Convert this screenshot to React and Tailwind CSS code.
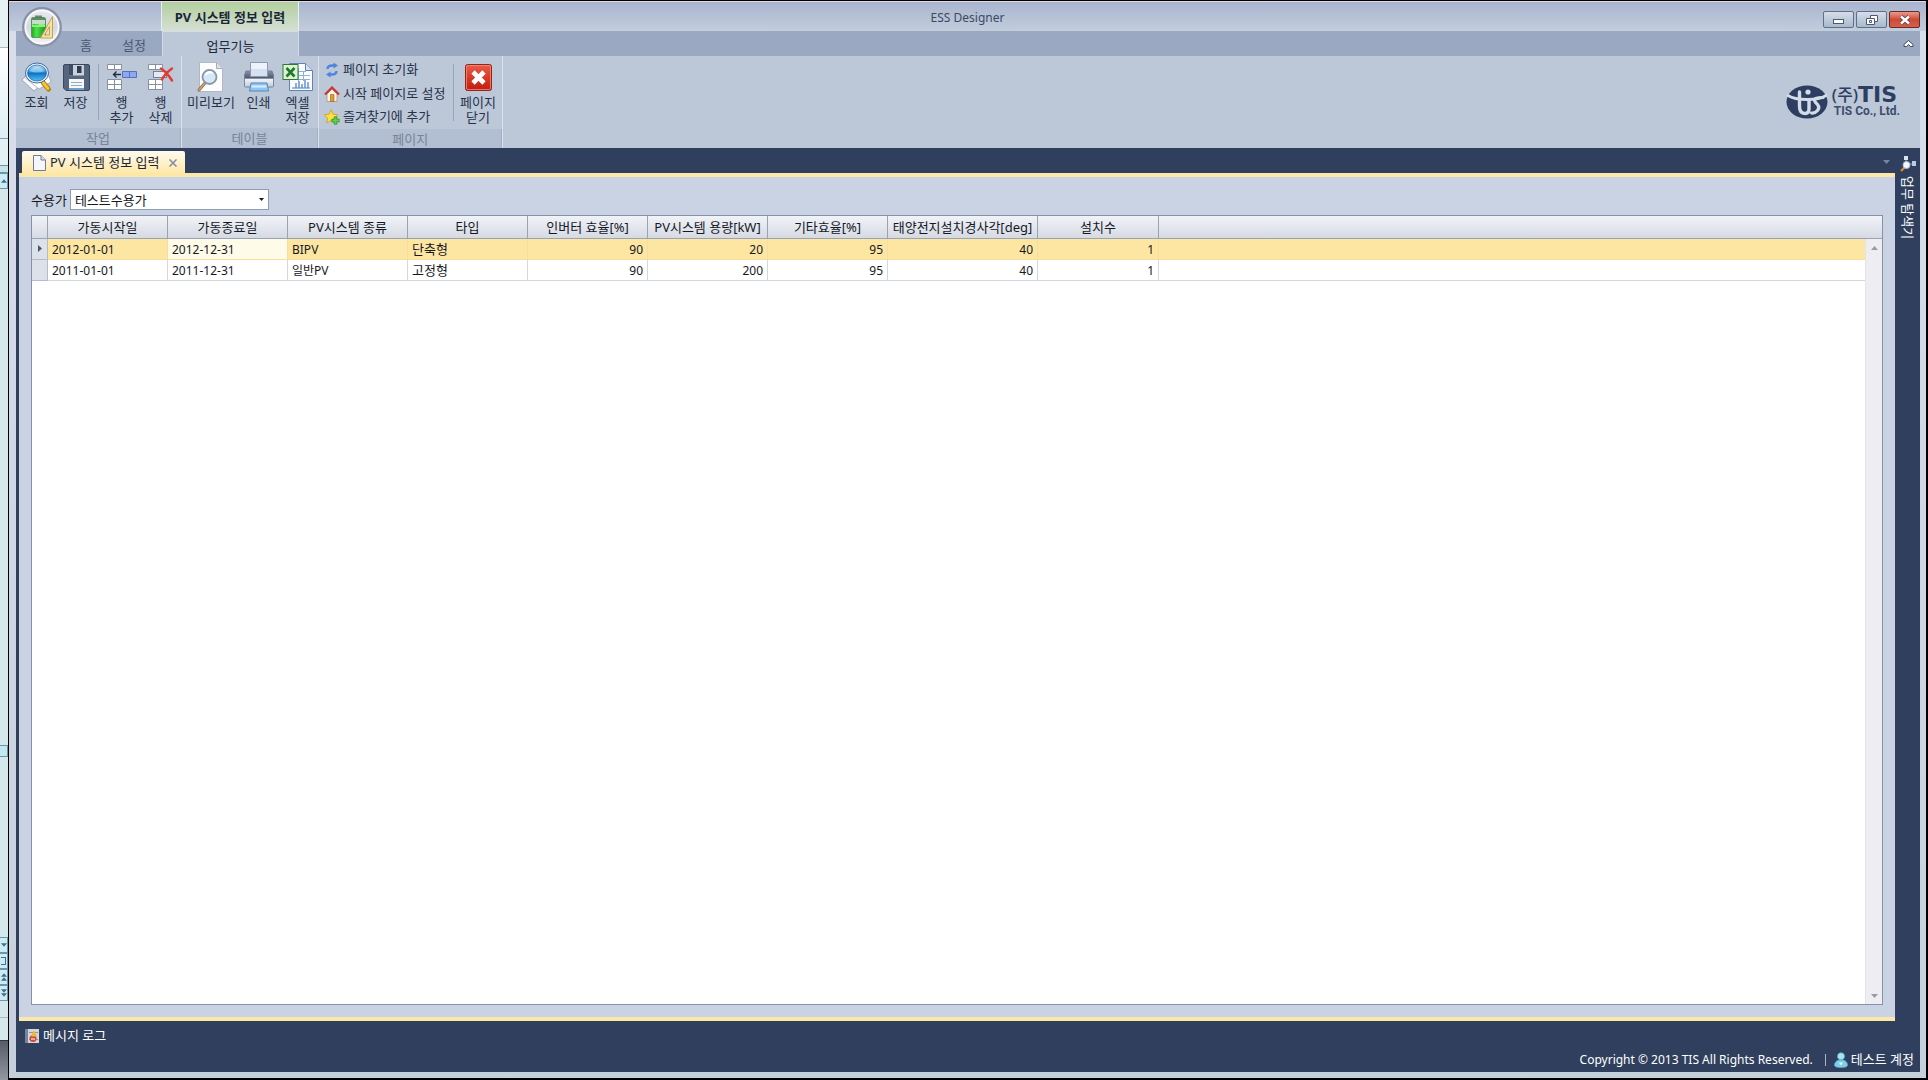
import { useState } from 'react';

const columns = [
  { key: 'start', label: '가동시작일', width: 'w-[120px]' },
  { key: 'end', label: '가동종료일', width: 'w-[120px]' },
  { key: 'kind', label: 'PV시스템 종류', width: 'w-[120px]' },
  { key: 'type', label: '타입', width: 'w-[120px]' },
  { key: 'inverter', label: '인버터 효율[%]', width: 'w-[120px]', numeric: true },
  { key: 'capacity', label: 'PV시스템 용량[kW]', width: 'w-[120px]', numeric: true },
  { key: 'etc', label: '기타효율[%]', width: 'w-[120px]', numeric: true },
  { key: 'angle', label: '태양전지설치경사각[deg]', width: 'w-[150px]', numeric: true },
  { key: 'count', label: '설치수', width: 'w-[121px]', numeric: true },
];

const rows = [
  { start: '2012-01-01', end: '2012-12-31', kind: 'BIPV', type: '단축형', inverter: 90, capacity: 20, etc: 95, angle: 40, count: 1 },
  { start: '2011-01-01', end: '2011-12-31', kind: '일반PV', type: '고정형', inverter: 90, capacity: 200, etc: 95, angle: 40, count: 1 },
];

/* icons */

const AppIcon = () => (
  <svg viewBox="0 0 40 40" className="h-10 w-10">
    <defs>
      <linearGradient id="orb" x1="0" y1="0" x2="0" y2="1">
        <stop offset="0" stopColor="#eceef3" />
        <stop offset="0.5" stopColor="#d3d7e0" />
        <stop offset="1" stopColor="#f6f7fa" />
      </linearGradient>
      <linearGradient id="tank" x1="0" y1="0" x2="1" y2="0">
        <stop offset="0" stopColor="#1fa524" />
        <stop offset="0.35" stopColor="#4fe046" />
        <stop offset="1" stopColor="#18952a" />
      </linearGradient>
    </defs>
    <circle cx="20" cy="20" r="18.800" fill="url(#orb)" stroke="#8690a6" strokeWidth="2.200" />
    <circle cx="20" cy="20" r="16.500" fill="none" stroke="#fbfbfd" strokeWidth="1.500" />
    <rect x="13" y="8.500" width="7" height="2.500" fill="#6d8a70" />
    <rect x="9.500" y="10.500" width="14" height="20" rx="1.500" fill="url(#tank)" stroke="#4c7d50" strokeWidth="0.7" />
    <rect x="10" y="11" width="13" height="6" fill="#c7dccb" />
    <path d="M10 11h13v2H10z" fill="#5f8a66" />
    <path d="M10 17q3.500 2.500 6.500.500t6.500 0v2.500H10z" fill="#8df27c" />
    <path
      d="M30.500 9.500v21.500H18.500zM27.500 19.500l-5 8.500h5z"
      fill="#f6e3a0"
      fillRule="evenodd"
      stroke="#c39a4c"
      strokeWidth="0.9"
    />
  </svg>
);

const SearchIcon = () => (
  <svg viewBox="0 0 32 32" className="h-8 w-8">
    <defs>
      <linearGradient id="lens" x1="0" y1="0" x2="0" y2="1">
        <stop offset="0" stopColor="#b9e4fb" />
        <stop offset="0.45" stopColor="#2b93dd" />
        <stop offset="0.5" stopColor="#0c6fc4" />
        <stop offset="1" stopColor="#55c3f5" />
      </linearGradient>
    </defs>
    <path d="M1 19l5-6 22 2-2 4-13 11z" fill="#f7f9fb" stroke="#8f98a8" strokeWidth="0.8" />
    <path d="M3 16l22-9 5 14-12 7z" fill="#fff" stroke="#9aa3b2" strokeWidth="0.8" />
    <path d="M22 21.500l5.500 6.500" stroke="#a97a10" strokeWidth="5" strokeLinecap="round" />
    <path d="M22 21.500l5 6" stroke="#f6c62e" strokeWidth="3" strokeLinecap="round" />
    <ellipse cx="16" cy="12" rx="11.500" ry="10" fill="#eef4fa" stroke="#3d6c9e" strokeWidth="1" />
    <ellipse cx="16" cy="12" rx="9.500" ry="8" fill="url(#lens)" stroke="#1a5d9c" strokeWidth="0.7" />
    <path d="M8.500 10q7.500-8 15 0-7.500 3-15 0z" fill="#fff" opacity="0.35" />
  </svg>
);

const SaveIcon = () => (
  <svg viewBox="0 0 32 32" className="h-8 w-8">
    <path d="M3.500 5q0-1.500 1.500-1.500h23q1.500 0 1.500 1.500v23q0 1.500-1.500 1.500H6L3.500 27z" fill="#56647d" stroke="#39465c" />
    <rect x="9" y="4" width="15" height="10.500" fill="#c9d1dc" />
    <rect x="17" y="5" width="4.500" height="7" fill="#303c4e" />
    <rect x="9" y="4" width="4" height="10.500" fill="#3f4c62" />
    <rect x="9" y="18" width="15" height="10" fill="#f5f8fb" />
    <path d="M11 21.500h11M11 24.500h11" stroke="#9ba8ba" />
    <rect x="9" y="27" width="15" height="2" fill="#6aa0d2" />
  </svg>
);

const RowInsertIcon = () => (
  <svg viewBox="0 0 32 32" className="h-8 w-8">
    <g fill="#fff" stroke="#8790a1">
      <path d="M1.500 3.500h14v5h-14zM8.500 3.500v5" />
      <path d="M1.500 18.500h14v10h-14zM8.500 18.500v10M1.500 23.500h14" />
    </g>
    <path d="M16.500 10.500h14v6h-14zM23.500 10.500v6" fill="#8fa9ee" stroke="#5571c4" />
    <path d="M15 13.500H7.500M10.500 10.500l-3 3 3 3" fill="none" stroke="#1f2c48" strokeWidth="1.300" />
  </svg>
);

const RowDeleteIcon = () => (
  <svg viewBox="0 0 32 32" className="h-8 w-8">
    <g fill="#fff" stroke="#8790a1">
      <path d="M3.500 3.500h14v5h-14zM10.500 3.500v5" />
      <path d="M3.500 18.500h14v10h-14zM10.500 18.500v10M3.500 23.500h14" />
    </g>
    <path d="M8.500 10.500h13v6h-13z" fill="#e3e8f1" stroke="#1f2c48" strokeDasharray="1 1" />
    <path d="M16 7.500q6 4 11 12M27 7.500q-7 5-10 11" fill="none" stroke="#e23a30" strokeWidth="2.400" strokeLinecap="round" />
  </svg>
);

const PreviewIcon = () => (
  <svg viewBox="0 0 32 32" className="h-8 w-8">
    <path d="M4.500 1.500h17l6 6v23h-23z" fill="#fdfdfe" stroke="#b1b7c3" />
    <path d="M21.500 1.500v6h6" fill="#dde2ea" stroke="#a4abb9" />
    <path d="M10 22l-6 7" stroke="#8f6a45" strokeWidth="3" strokeLinecap="round" />
    <path d="M10 22l-6 7" stroke="#d0a679" strokeWidth="1.400" strokeLinecap="round" />
    <circle cx="14.500" cy="16" r="7" fill="#d4e8f7" stroke="#8b95a5" strokeWidth="1.800" />
    <path d="M10.500 14q3-4.500 7-2" fill="none" stroke="#fff" strokeWidth="2" />
  </svg>
);

const PrintIcon = () => (
  <svg viewBox="0 0 32 32" className="h-8 w-8">
    <defs>
      <linearGradient id="printer" x1="0" y1="0" x2="0" y2="1">
        <stop offset="0" stopColor="#8791a5" />
        <stop offset="0.45" stopColor="#4c586f" />
        <stop offset="0.5" stopColor="#f1f4f9" />
        <stop offset="1" stopColor="#c2cad9" />
      </linearGradient>
    </defs>
    <path d="M3 10h26l1.500 4v11q0 1-1 1h-27q-1 0-1-1V14z" fill="url(#printer)" stroke="#737e93" strokeWidth="0.9" />
    <path d="M7.500 1.500h17v14h-17z" fill="#eef3fb" stroke="#8d99b0" />
    <path d="M8 8h16v7H8z" fill="#d5e0f1" />
    <path d="M8 22h16l1.500 8h-19z" fill="#8ec6f2" stroke="#4f7fb5" strokeWidth="0.9" />
    <path d="M8.500 25.500h15" stroke="#d9efff" strokeWidth="2" />
  </svg>
);

const ExcelIcon = () => (
  <svg viewBox="0 0 32 32" className="h-8 w-8">
    <path d="M7.500 2.500h16l7 7v20h-23z" fill="#fafcff" stroke="#5f83b7" />
    <path d="M23.500 2.500v7h7" fill="#d5e0f0" stroke="#5f83b7" />
    <path d="M11 10.500h13M11 14.500h17M11 18.500h17M16.500 7v13M21.500 10v10" stroke="#91aed6" />
    <path d="M10 27h18" stroke="#4c79b9" />
    <path d="M14 22v5M17 20v7M20 23v4M23 19v8M26 21v6" stroke="#5a8cd0" strokeWidth="1.400" />
    <rect x="1" y="3.500" width="15" height="15" fill="#dff0d8" stroke="#2d7a34" />
    <path d="M4.500 7l8 8.500M12.500 7l-8 8.500" stroke="#1f7a2a" strokeWidth="2.600" />
  </svg>
);

const ClosePageIcon = () => (
  <svg viewBox="0 0 32 32" className="h-8 w-8">
    <defs>
      <linearGradient id="closeRed" x1="0" y1="0" x2="0" y2="1">
        <stop offset="0" stopColor="#e8604c" />
        <stop offset="0.5" stopColor="#da3a26" />
        <stop offset="1" stopColor="#c01b10" />
      </linearGradient>
    </defs>
    <rect x="3.500" y="3.500" width="26" height="26" rx="2" fill="url(#closeRed)" stroke="#94231b" />
    <rect x="4.500" y="4.500" width="24" height="24" rx="1.500" fill="none" stroke="#f08b79" strokeWidth="0.8" />
    <path d="M11 11l11 11M22 11l-11 11" stroke="#fff" strokeWidth="4.600" />
  </svg>
);

const RefreshIcon = () => (
  <svg viewBox="0 0 16 16" className="h-4 w-4 shrink-0">
    <path d="M3.500 7q0-3.500 5-3.500h1.500" fill="none" stroke="#4f83dd" strokeWidth="2.400" />
    <path d="M9.500.500v6l4.500-3z" fill="#4f83dd" />
    <path d="M12.500 9q0 3.500-5 3.500H6" fill="none" stroke="#4f83dd" strokeWidth="2.400" />
    <path d="M6.500 15.500v-6l-4.500 3z" fill="#4f83dd" />
  </svg>
);

const HomeIcon = () => (
  <svg viewBox="0 0 16 16" className="h-4 w-4 shrink-0">
    <path d="M3 8l5-5 5 5v7.500H3z" fill="#fdf6e8" stroke="#a58f79" strokeWidth="0.8" />
    <path d="M6.500 8.500h3.500v7H6.500z" fill="#e29b2e" stroke="#9b5f16" strokeWidth="0.6" />
    <path d="M1 8.500l7-7 7 7" fill="none" stroke="#c63a35" strokeWidth="2.200" />
  </svg>
);

const FavoriteIcon = () => (
  <svg viewBox="0 0 16 16" className="h-4 w-4 shrink-0">
    <path d="M7 0.800l2 4.400 4.800.6-3.500 3.300.9 4.800L7 11.500l-4.200 2.400.9-4.800L.3 5.800l4.700-.6z" fill="#ffe23f" stroke="#d29c14" strokeWidth="0.8" />
    <path d="M11.500 7.500v8M7.500 11.500h8" stroke="#2c8f26" strokeWidth="3.400" />
    <path d="M11.500 8.200v6.600M8.200 11.500h6.600" stroke="#62d04c" strokeWidth="2" />
  </svg>
);

const PageIcon = () => (
  <svg viewBox="0 0 13 16" className="h-4 w-[13px]">
    <path d="M.5.500h7.500l4.500 4.500v10.500H.5z" fill="#f4f6fc" stroke="#70799a" />
    <path d="M8 .5V5h4.500" fill="#d5daea" stroke="#70799a" />
  </svg>
);

const LogIcon = () => (
  <svg viewBox="0 0 14 14" className="h-[14px] w-[14px]">
    <rect width="14" height="14" fill="#d3d6dd" />
    <rect width="3" height="14" fill="#7784a0" />
    <path d="M4 3.500h9M4 10.500h9" stroke="#8b95ab" />
    <circle cx="8" cy="9.500" r="3.500" fill="#cf4a38" />
    <path d="M9 1l3 6.500H6z" fill="#f0b92e" />
    <path d="M6 10h4" stroke="#fff" />
  </svg>
);

const ExplorerIcon = () => (
  <svg viewBox="0 0 16 16" className="h-4 w-4">
    <rect x="4" y="0" width="4" height="4" fill="#d9e2ef" />
    <rect x="12" y="5" width="4" height="5" fill="#b9cce6" />
    <path d="M6 4v4h6" fill="none" stroke="#8ea3c2" />
    <path d="M4.500 11.500l-3.500 3.500" stroke="#e08b2b" strokeWidth="2.200" />
    <circle cx="6.500" cy="9" r="3.500" fill="#f4f8fc" stroke="#a9b9d0" />
  </svg>
);

const UserIcon = () => (
  <svg viewBox="0 0 14 16" className="h-4 w-[14px]">
    <path d="M.5 13.500Q.5 9 5 8h4q4.500 1 4.500 5.500Q13 15.500 7 15.500T.5 13.500z" fill="#7fd0e6" stroke="#5ab0cb" strokeWidth="0.7" />
    <circle cx="7" cy="4.300" r="3.500" fill="#a6e4f2" stroke="#5ab0cb" strokeWidth="0.7" />
    <path d="M5 10.500h4l-2 3z" fill="#e9fbff" />
  </svg>
);

const CompanyMark = () => (
  <svg viewBox="0 0 42 34" className="h-[34px] w-[42px]">
    <ellipse cx="21" cy="17" rx="20.500" ry="16.500" fill="#2d3e60" />
    <g fill="none" stroke="#d3dbe8" strokeLinecap="round" strokeLinejoin="round">
      <path d="M2 10.500q6 4 19 4t19-4" strokeWidth="2.800" />
      <path d="M13.500 7v14q0 7.500 5.500 7.500 4 0 4-4.500v-8.500" strokeWidth="3.400" />
      <path d="M37 12.500q-9 0-8.500 3 .5 2 3 4 2.500 3 0 6-2.500 3-6 2.500" strokeWidth="3.200" />
    </g>
    <circle cx="22" cy="7" r="2.600" fill="#d3dbe8" />
  </svg>
);

const Arrow = ({ up, className }) => (
  <svg viewBox="0 0 7 4" className={className}>
    <path d={up ? 'M0 4h7L3.500 0z' : 'M0 0h7L3.500 4z'} fill="currentColor" />
  </svg>
);

/* desktop that shows at the left of the window */

const stripBox = 'flex h-4 items-center justify-center border border-l-0 border-[#6a97a8] bg-[#cdebf5] text-[#3f6f86]';

const DesktopStrip = () => (
  <div aria-hidden="true" className="flex w-2 shrink-0 flex-col bg-[#d5e8ec]">
    <div className="h-12 border-b border-[#a9bcc0] bg-[#e6f3f2]" />
    <div className="h-[91px] border-b border-[#7fa3ad] bg-linear-to-b from-white to-[#dceff3]" />
    <div className="h-[26px] bg-[#e3f1f4]" />
    <div className="h-2 border-y border-[#6a97a8] bg-[#c8e2ea]" />
    <div className={stripBox}><Arrow up className="h-1 w-[6px]" /></div>
    <div className="flex-[556]" />
    <div className="h-3 border border-l-0 border-[#6a97a8] bg-[#c4e8f2]" />
    <div className="flex-[180]" />
    <div className={stripBox}><Arrow className="h-1 w-[6px]" /></div>
    <div className={stripBox}><div className="h-2 w-[5px] border border-l-0 border-[#3f6f86]" /></div>
    <div className={`${stripBox} flex-col`}>
      <Arrow up className="h-1 w-[6px]" />
      <Arrow up className="h-1 w-[6px]" />
    </div>
    <div className={`${stripBox} flex-col`}>
      <Arrow className="h-1 w-[6px]" />
      <Arrow className="h-1 w-[6px]" />
    </div>
    <div className="h-[17px] border-b border-[#a9bcc0]" />
    <div className="h-[22px]" />
    <div className="h-10 border-t border-[#30353d] bg-linear-to-b from-[#555c66] to-[#9299a3]" />
  </div>
);

const windowButton = 'flex h-[17px] w-[31px] items-center justify-center rounded-[2px] border';

const TitleBar = () => (
  <header className="grid h-[30px] grid-cols-[1fr_auto_1fr] border-t border-[#e6d9e6] bg-linear-to-b from-[#a9b5cf] to-[#c2cddd]">
    <div className="pl-[152px]">
      <div className="flex h-full w-[138px] items-center justify-center border-x border-[#e9eef2] bg-linear-to-b from-[#b3cf9f] to-[#d5dfd4] pt-[2px] text-[13px] font-bold text-[#1b2638]">
        PV 시스템 정보 입력
      </div>
    </div>
    <h1 className="self-center pt-[2px] text-xs text-[#3c4a61]">ESS Designer</h1>
    <div className="flex items-end justify-end gap-[2px] pr-[6px] pb-[3px]">
      <button type="button" aria-label="최소화" className={`${windowButton} border-[#5d6f8a] bg-linear-to-b from-[#d5deea] to-[#a9b8cc]`}>
        <span className="mt-[3px] h-[5px] w-[11px] border border-[#4b5a72] bg-white" />
      </button>
      <button type="button" aria-label="이전 크기로" className={`${windowButton} border-[#5d6f8a] bg-linear-to-b from-[#d5deea] to-[#a9b8cc]`}>
        <svg viewBox="0 0 12 12" className="h-3 w-3" fill="#fff" stroke="#4b5a72">
          <path d="M4.500 1.500h7v6h-7z" />
          <path d="M.5 4.500h8v6h-8z" />
          <path d="M3.500 6.500h2v2h-2z" />
        </svg>
      </button>
      <button type="button" aria-label="닫기" className={`${windowButton} border-[#6b2a27] bg-linear-to-b from-[#e59a8c] via-[#cf4a34] to-[#d4604a]`}>
        <svg viewBox="0 0 12 10" className="h-[10px] w-3">
          <path d="M2 1.500l8 7M10 1.500l-8 7" stroke="#5a3a42" strokeWidth="4" />
          <path d="M2 1.500l8 7M10 1.500l-8 7" stroke="#fff" strokeWidth="2.400" />
        </svg>
      </button>
    </div>
  </header>
);

const RibbonTabs = () => (
  <nav className="flex h-[25px] items-stretch bg-[#9aa8c1] pl-[46px] text-[13px] text-[#4b5872]">
    <button type="button" className="w-12 pt-[5px]">홈</button>
    <button type="button" className="w-12 pt-[5px]">설정</button>
    <div className="w-1" />
    <button type="button" className="w-[137px] border border-b-0 border-[#d3dbe7] bg-[#bcc7d8] pt-[5px] text-[#1b2638]">업무기능</button>
    <button type="button" aria-label="리본 최소화" className="mr-[6px] ml-auto self-center">
      <svg viewBox="0 0 11 9" className="h-[9px] w-[11px]">
        <path d="M1 7.500V5.500l4.500-4 4.500 4v2H7.500l-2-2-2 2z" fill="#fff" stroke="#3b4862" />
      </svg>
    </button>
  </nav>
);

const BigButton = ({ icon, lines, width = 'w-[39px]' }) => (
  <button type="button" className={`flex ${width} flex-col items-center pt-[5px] leading-[15px]`}>
    {icon}
    <span className="mt-[2px] whitespace-nowrap">
      {lines.map((line) => (
        <span key={line} className="block">{line}</span>
      ))}
    </span>
  </button>
);

const SmallButton = ({ icon, label }) => (
  <button type="button" className="flex h-6 items-center gap-[3px] whitespace-nowrap">
    {icon}
    {label}
  </button>
);

const Separator = () => <div className="mt-2 mb-2 w-px bg-[#98a5bb]" />;

const RibbonGroup = ({ label, children }) => (
  <section className="flex flex-col border-r border-[#dbe2ec]">
    <div className="flex h-[73px] px-px">{children}</div>
    <div className="flex-1 border-r border-[#a3b0c5] bg-[#b2bed1] text-center leading-[20px] text-[#77839a]">{label}</div>
  </section>
);

const Ribbon = () => (
  <div className="flex h-[92px] bg-[#bcc7d8] text-[13px] text-[#26334a]">
    <RibbonGroup label="작업">
      <BigButton icon={<SearchIcon />} lines={['조회']} />
      <BigButton icon={<SaveIcon />} lines={['저장']} />
      <div className="flex px-[3px]"><Separator /></div>
      <BigButton icon={<RowInsertIcon />} lines={['행', '추가']} />
      <BigButton icon={<RowDeleteIcon />} lines={['행', '삭제']} />
    </RibbonGroup>
    <RibbonGroup label="테이블">
      <BigButton icon={<PreviewIcon />} lines={['미리보기']} width="w-14" />
      <BigButton icon={<PrintIcon />} lines={['인쇄']} />
      <BigButton icon={<ExcelIcon />} lines={['엑셀', '저장']} />
    </RibbonGroup>
    <RibbonGroup label="페이지">
      <div className="flex flex-col pt-[2px] pr-2 pl-1">
        <SmallButton icon={<RefreshIcon />} label="페이지 초기화" />
        <SmallButton icon={<HomeIcon />} label="시작 페이지로 설정" />
        <SmallButton icon={<FavoriteIcon />} label="즐겨찾기에 추가" />
      </div>
      <Separator />
      <BigButton icon={<ClosePageIcon />} lines={['페이지', '닫기']} width="w-[47px]" />
    </RibbonGroup>
    <div className="mr-5 ml-auto flex items-center gap-1 text-[#2d3e60]">
      <CompanyMark />
      <div className="whitespace-nowrap">
        <div className="flex items-center leading-[18px]">
          <span className="text-[17px] leading-[18px] font-medium">(주)</span>
          <span className="font-['DejaVu_Sans'] text-[22px] leading-[18px] font-bold">TIS</span>
        </div>
        <div className="pl-[2px] font-['Roboto'] text-[12px] leading-[14px] font-bold text-[#3d4d6c]">TIS Co., Ltd.</div>
      </div>
    </div>
  </div>
);

const DocumentTabs = () => (
  <div className="flex h-[25px] items-end bg-[#2f3f5d] pl-[6px]">
    <div className="flex h-[22px] w-[163px] items-center rounded-t-[2px] bg-linear-to-b from-[#fffaf0] to-[#ffe8a6] pt-px pl-[11px] text-[13px] text-[#1b2638]">
      <PageIcon />
      <span className="ml-1 whitespace-nowrap">PV 시스템 정보 입력</span>
      <button type="button" aria-label="탭 닫기" className="ml-[9px]">
        <svg viewBox="0 0 8 8" className="h-2 w-2">
          <path d="M.5.500l7 7M7.500.500l-7 7" stroke="#8289a0" strokeWidth="1.500" />
        </svg>
      </button>
    </div>
    <button type="button" aria-label="탭 목록" className="mr-[5px] mb-[9px] ml-auto text-[#7287ab]">
      <Arrow className="h-1 w-[7px]" />
    </button>
  </div>
);

const cellBorder = 'border-r border-b border-[#d3d7de]';

const DataGrid = () => {
  const [selected, setSelected] = useState(0);

  return (
    <div className="relative flex-1 border border-[#8592a9] bg-white">
      <table className="w-full table-fixed border-separate border-spacing-0 text-xs text-[#15191f]">
        <thead>
          <tr className="h-[23px] text-[13px]">
            <th className="w-4 border-r border-b border-[#9aa3b5] bg-linear-to-b from-[#f1f3f7] to-[#d6dae4]" />
            {columns.map((column) => (
              <th
                key={column.key}
                className={`${column.width} border-r border-b border-[#9aa3b5] bg-linear-to-b from-[#f1f3f7] to-[#d6dae4] p-0 leading-[22px] font-normal whitespace-nowrap`}
              >
                {column.label}
              </th>
            ))}
            <th className="border-b border-[#9aa3b5] bg-linear-to-b from-[#f1f3f7] to-[#d6dae4]" />
          </tr>
        </thead>
        <tbody>
          {rows.map((row, index) => {
            const active = index === selected;
            return (
              <tr key={row.start} onClick={() => setSelected(index)} className={active ? 'h-[21px] bg-[#fde6a2]' : 'h-[21px] bg-white'}>
                <td className="border-r border-b border-[#b4bccb] bg-[#dde1ea] p-0">
                  {active && (
                    <svg viewBox="0 0 4 7" className="mx-auto h-[7px] w-1">
                      <path d="M0 0l4 3.500L0 7z" fill="#4b5872" />
                    </svg>
                  )}
                </td>
                {columns.map((column) => (
                  <td
                    key={column.key}
                    className={`${active ? 'border-r border-b border-[#f5dea0]' : cellBorder} ${active && column.key === 'end' ? 'bg-[#fffbe9]' : ''} ${column.numeric ? 'text-right' : ''} ${column.key === 'type' ? 'text-[13px]' : ''} px-1 pt-px pb-0 leading-[19px]`}
                  >
                    {row[column.key]}
                  </td>
                ))}
                <td className={active ? 'border-b border-[#f5dea0]' : 'border-b border-[#d3d7de]'} />
              </tr>
            );
          })}
        </tbody>
      </table>
      <div className="absolute top-[23px] right-0 bottom-0 flex w-[17px] flex-col justify-between border-l border-[#e3e4e9] bg-[#eeeef2] pt-[7px] pb-[6px] text-[#969ba6]">
        <button type="button" aria-label="위로" className="flex justify-center"><Arrow up className="h-1 w-[7px]" /></button>
        <button type="button" aria-label="아래로" className="flex justify-center"><Arrow className="h-1 w-[7px]" /></button>
      </div>
    </div>
  );
};

const App = () => (
  <div className="flex h-screen overflow-hidden font-['Noto_Sans','Noto_Sans_CJK_KR',sans-serif]">
    <DesktopStrip />
    <div className="relative flex min-w-0 flex-1 flex-col border-y border-r-2 border-b-2 border-l border-black bg-linear-to-b from-[#d9deeb] to-[#c6d0dd]">
      <TitleBar />
      <div className="absolute top-[6px] left-[13px]"><AppIcon /></div>
      <div className="mr-[6px] mb-[6px] ml-[7px] flex min-h-0 flex-1 flex-col bg-[#2f3f5d]">
        <RibbonTabs />
        <Ribbon />
        <div className="flex min-h-0 flex-1">
          <div className="flex min-w-0 flex-1 flex-col">
            <DocumentTabs />
            <main className="ml-[3px] flex flex-1 flex-col border-t-4 border-b-4 border-[#fbe7a8] bg-[#c9d3e3] px-3 pt-3 pb-3">
              <div className="mb-1 flex items-center gap-[3px] text-[13px] text-[#15191f]">
                <label htmlFor="customer" className="pt-px">수용가</label>
                <div className="relative">
                  <select
                    id="customer"
                    defaultValue="테스트수용가"
                    className="h-[21px] w-[199px] appearance-none border border-[#8f9db4] bg-white px-1 pt-px leading-[18px]"
                  >
                    <option>테스트수용가</option>
                  </select>
                  <Arrow className="pointer-events-none absolute top-[9px] right-[5px] h-[3px] w-[5px]" />
                </div>
              </div>
              <DataGrid />
            </main>
          </div>
          <aside className="w-[25px] pt-2 text-[13px] text-white">
            <button type="button" className="flex w-full flex-col items-center gap-1">
              <ExplorerIcon />
              <span className="leading-4 [text-orientation:sideways] [writing-mode:vertical-rl]">업무 탐색기</span>
            </button>
          </aside>
        </div>
        <footer className="flex h-[51px] flex-col justify-between pt-[5px] pb-1 text-white">
          <button type="button" className="flex h-5 items-center gap-[4px] self-start pl-[9px] text-[13px]">
            <LogIcon />
            메시지 로그
          </button>
          <div className="flex h-4 items-center justify-end pr-[6px] text-xs">
            <span>Copyright © 2013 TIS All Rights Reserved.</span>
            <span className="mx-2 ml-3 h-3 w-px bg-[#aab4c6]" />
            <UserIcon />
            <span className="ml-[3px] text-[13px]">테스트 계정</span>
          </div>
        </footer>
      </div>
    </div>
  </div>
);

export default App;
